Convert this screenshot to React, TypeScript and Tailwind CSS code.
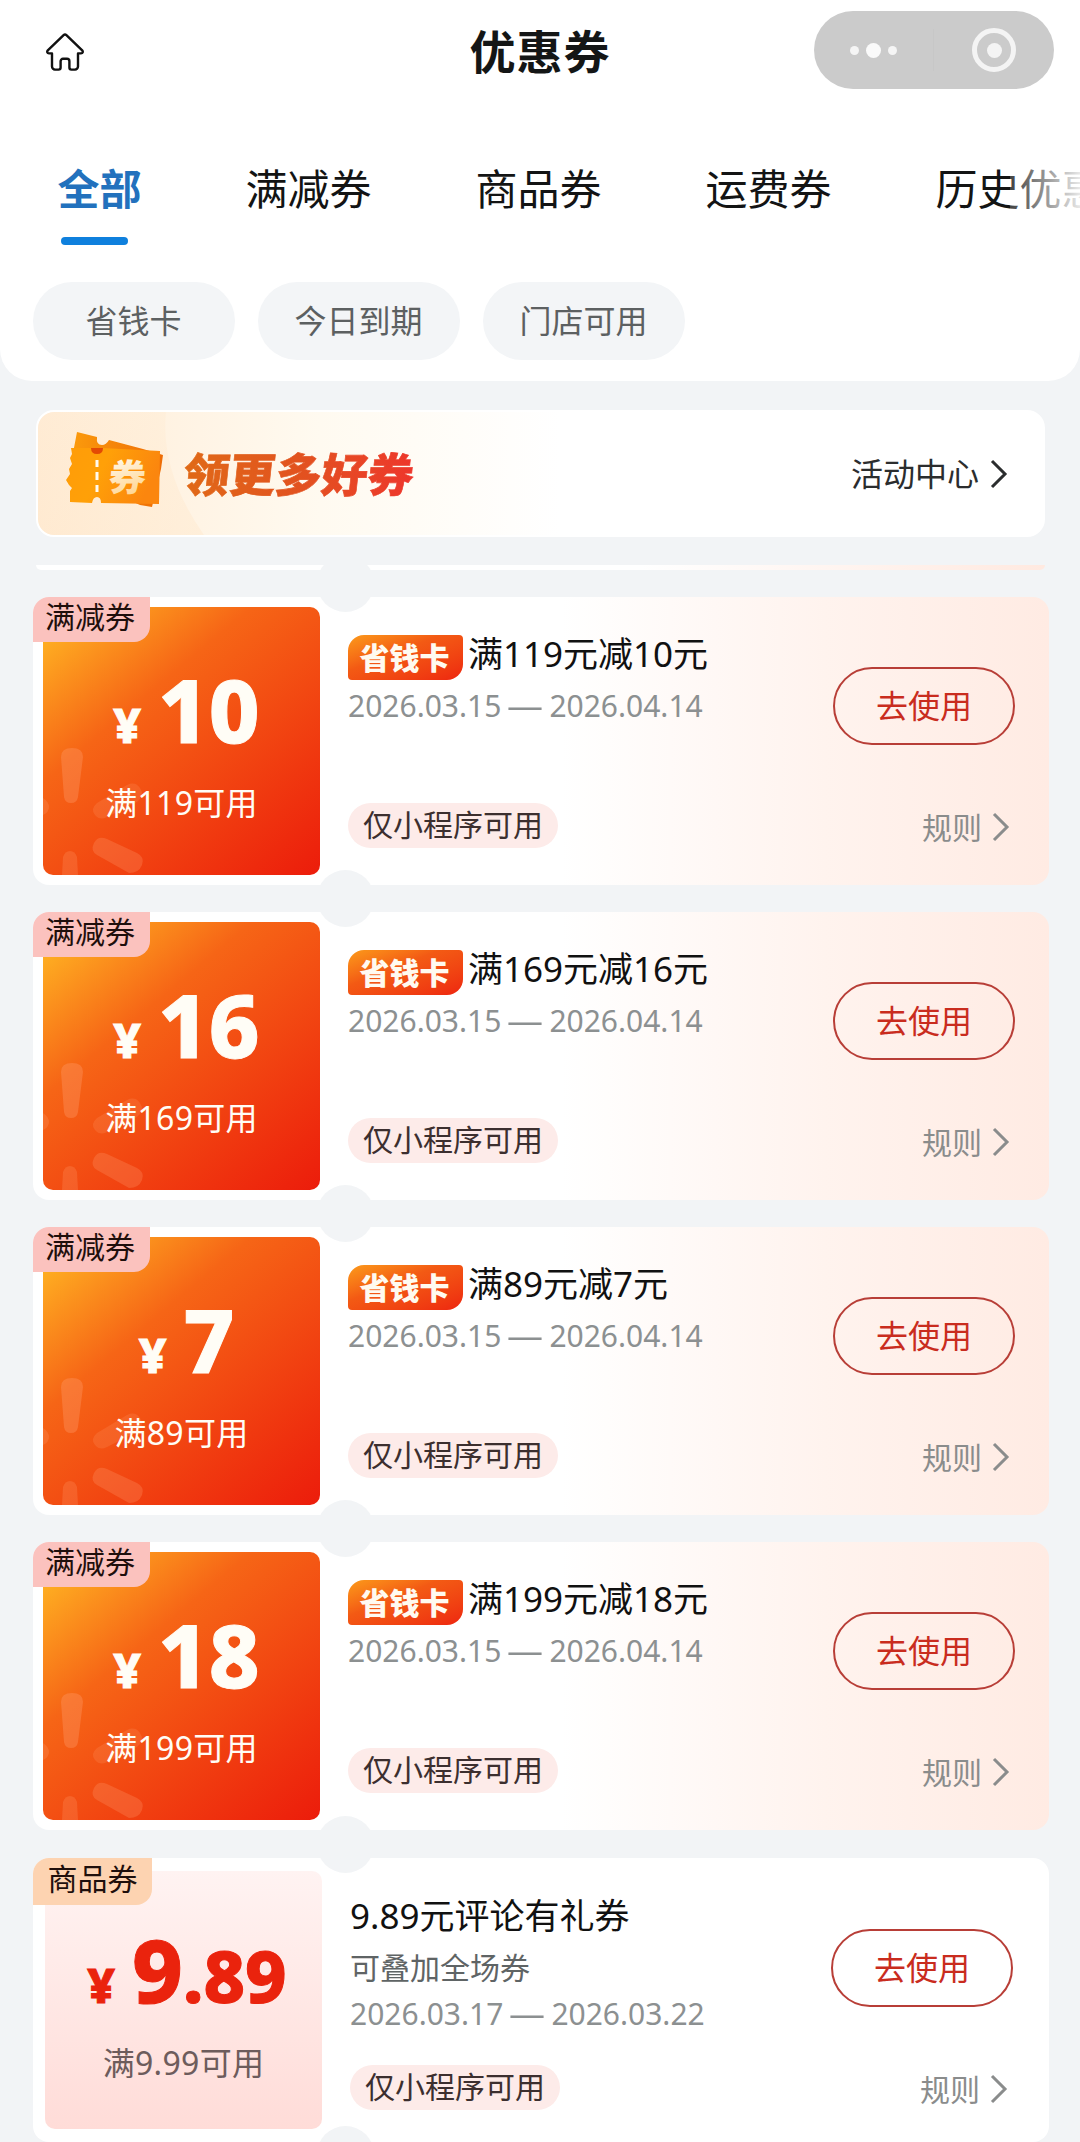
import React from 'react';

interface Coupon {
  id: number;
  kind: 'discount' | 'product';
  label: string;
  amount: string;
  decimals?: string;
  condition: string;
  title: string;
  note?: string;
  start: string;
  end: string;
}

const tabs = ['全部', '满减券', '商品券', '运费券', '历史优惠券'];
const filters = ['省钱卡', '今日到期', '门店可用'];

const coupons: Coupon[] = [
  { id: 1, kind: 'discount', label: '满减券', amount: '10', condition: '满119可用', title: '满119元减10元', start: '2026.03.15', end: '2026.04.14' },
  { id: 2, kind: 'discount', label: '满减券', amount: '16', condition: '满169可用', title: '满169元减16元', start: '2026.03.15', end: '2026.04.14' },
  { id: 3, kind: 'discount', label: '满减券', amount: '7', condition: '满89可用', title: '满89元减7元', start: '2026.03.15', end: '2026.04.14' },
  { id: 4, kind: 'discount', label: '满减券', amount: '18', condition: '满199可用', title: '满199元减18元', start: '2026.03.15', end: '2026.04.14' },
  { id: 5, kind: 'product', label: '商品券', amount: '9', decimals: '.89', condition: '满9.99可用', title: '9.89元评论有礼券', note: '可叠加全场券', start: '2026.03.17', end: '2026.03.22' },
];

const Chevron: React.FC<{ className: string }> = ({ className }) => (
  <svg className={className} width="18" height="30" viewBox="0 0 18 30" fill="none" stroke="currentColor" strokeWidth="3">
    <path d="M2 2l13 13L2 28" />
  </svg>
);

const Header = () => (
  <header className="relative flex h-[102px] items-center justify-center">
    <svg className="absolute left-[45px] top-[32px]" width="40" height="40" viewBox="0 0 40 40" fill="none" stroke="#111" strokeWidth="2.4" strokeLinejoin="round">
      <path d="M18.6 3.2a2 2 0 0 1 2.8 0L37.2 18.4c1.2 1.3.6 3-1.2 3h-3v13.2a3 3 0 0 1-3 3h-3.6a2 2 0 0 1-2-2v-6.4a2.4 2.4 0 0 0-2.4-2.4h-4a2.4 2.4 0 0 0-2.4 2.4v6.4a2 2 0 0 1-2 2H10a3 3 0 0 1-3-3V21.400H4c-1.800 0-2.400-1.700-1.200-3z" />
    </svg>
    <h1 className="text-[46px] leading-none font-bold tracking-[1px] text-[#141616]">优惠券</h1>
    <div className="absolute left-[814px] top-[11px] flex h-[78px] w-[240px] items-center rounded-full bg-[#cbcbcb]">
      <div className="flex w-[119px] items-center justify-center gap-[7px]">
        <i className="size-[9px] rounded-full bg-white/80" />
        <i className="size-[15px] rounded-full bg-white/90" />
        <i className="size-[9px] rounded-full bg-white/80" />
      </div>
      <div className="h-[42px] w-px bg-[#c7c7c7]" />
      <div className="flex flex-1 justify-center">
        <div className="flex size-[44px] items-center justify-center rounded-full border-[5px] border-[#f4f4f4]">
          <i className="size-[15px] rounded-full bg-[#f4f4f4]" />
        </div>
      </div>
    </div>
  </header>
);

const TicketIcon = () => (
  <svg width="100" height="84" viewBox="0 0 100 84">
    <defs>
      <linearGradient id="ticketFront" x1="0" y1="0" x2="1" y2="0.3">
        <stop offset="0" stopColor="#ff9c08" />
        <stop offset="0.45" stopColor="#ffa008" />
        <stop offset="1" stopColor="#fb860e" />
      </linearGradient>
      <linearGradient id="ticketBack" x1="0" y1="0" x2="1" y2="0">
        <stop offset="0" stopColor="#fb9a0c" />
        <stop offset="1" stopColor="#ee6c05" />
      </linearGradient>
      <linearGradient id="ticketText" x1="0" y1="0" x2="0.3" y2="1">
        <stop offset="0" stopColor="#fffef8" />
        <stop offset="1" stopColor="#ffd591" />
      </linearGradient>
    </defs>
    <path d="M11 0l20 5q-1 8 5 8 4 0 7-5l34 9 20 6-2 14-9 38-12-2-66-30-1-22z" fill="url(#ticketBack)" />
    <path d="M5 16h21q0 5 5 5t5-5l58 3-1 53-58-1q0-6-4-6t-5 6l-22-1v-11l2-3-3-3-3-5 4-6-1-5 3-5-2-6 2-4z" fill="url(#ticketFront)" />
    <path d="M25 16h12q0 6-6 6t-6-6z" fill="#e34a04" />
    <path d="M31 28v7M31 40v8M31 53v7" stroke="#fffaf0" strokeWidth="3" />
    <text x="43" y="59" fontSize="37" fontWeight="900" fill="url(#ticketText)" transform="skewX(-5) translate(4 0)">券</text>
  </svg>
);

const Banner = () => (
  <div className="relative ml-9 flex h-[127px] w-[1009px] items-center overflow-hidden rounded-[18px] border-2 border-white bg-linear-to-r from-[#ffecd6] via-[#fffaf0] via-28% to-white to-52% pl-[28px] pr-[35px]">
    <svg className="absolute left-0 top-0" width="180" height="123" viewBox="0 0 180 123">
      <defs>
        <linearGradient id="bannerGlow" x1="0" y1="0" x2="1" y2="1">
          <stop offset="0" stopColor="#ffdcb0" stopOpacity="0.05" />
          <stop offset="1" stopColor="#ffe0bd" stopOpacity="0.28" />
        </linearGradient>
      </defs>
      <path d="M0 0h128q-6 60 38 123H0z" fill="url(#bannerGlow)" />
    </svg>
    <div className="relative">
      <TicketIcon />
    </div>
    <span className="relative ml-[14px] -skew-x-6 bg-linear-to-r from-[#e06a16] via-[#e2521f] to-[#ee342c] bg-clip-text px-1 text-[46px] leading-[60px] font-black text-transparent [-webkit-text-stroke:0.7px_transparent]">
      领更多好券
    </span>
    <span className="ml-auto text-[32px] leading-none text-[#2b2d2e]">活动中心</span>
    <Chevron className="ml-[11px] text-[#2b2d2e]" />
  </div>
);

const Sparks = () => (
  <svg className="absolute inset-0" width="278" height="268" viewBox="0 0 278 268" fill="#ff9a6a" fillOpacity="0.36">
    <path d="M18 150q0-9 11-9t11 9l-5 40q-1 6-7 6t-7-6z" />
    <path d="M84 178q8-4 13 3t-3 14L64 210q-7 4-12-2t2-12z" fillOpacity="0.22" />
    <path d="M51 236q4-8 13-4l30 14q8 4 5 12t-13 8L54 248q-7-4-3-12z" fillOpacity="0.28" />
    <path d="M19 268l1-18q2-6 7-6t7 6l1 18z" fillOpacity="0.26" />
    <path d="M0 191q6 4 6 9t-6 8z" fillOpacity="0.26" />
  </svg>
);

const SavingBadge = () => (
  <span className="mt-[3px] flex h-[45px] w-[115px] items-center justify-center rounded-[4px] rounded-tl-[16px] rounded-br-[16px] bg-linear-to-br from-[#fb9a1b] via-[#f35a14] via-40% to-[#ee2410] pt-[2px] pr-[2px] text-[30px] leading-none font-black text-[#fffaf0]">
    省钱卡
  </span>
);

const CouponCard: React.FC<{ coupon: Coupon }> = ({ coupon }) => {
  const isProduct = coupon.kind === 'product';

  return (
    <div
      className={`relative flex w-[1016px] shrink-0 rounded-[16px] ${
        isProduct ? 'mt-px h-[284px] bg-white' : 'h-[288px] bg-linear-to-r from-white from-52% via-[#fff3ee] via-78% to-[#ffebe3]'
      }`}
    >
      {/* Left value tile */}
      <div
        className={`relative flex w-[277px] flex-col items-center overflow-hidden rounded-[10px] ${
          isProduct
            ? 'ml-3 mt-[13px] h-[258px] bg-linear-to-b from-[#fff3f2] to-[#ffdcd8] text-[#ea230d]'
            : 'ml-[10px] mt-[10px] h-[268px] bg-linear-[140deg] from-[#ffb222] from-5% via-[#f66516] via-35% to-[#ec1c0b] text-[#fffdf6]'
        }`}
      >
        {!isProduct && <Sparks />}
        <div
          className={`relative flex items-baseline font-extrabold leading-[88px] [-webkit-text-stroke:1px_currentColor] ${
            isProduct ? 'mt-[54px] pl-[7px]' : 'mt-[58px] pl-[10px]'
          }`}
        >
          <span className="mr-[17px] text-[48px]">¥</span>
          <span className="text-[88px]">{coupon.amount}</span>
          {coupon.decimals && <span className="text-[72px]">{coupon.decimals}</span>}
        </div>
        <div className={`relative mt-[14px] text-[32px] leading-[40px] tracking-[0.3px] ${isProduct ? 'text-[#6d5c5c]' : ''}`}>{coupon.condition}</div>
      </div>

      {/* Details */}
      <div className={`flex flex-1 flex-col items-start ${isProduct ? 'pl-[28px] pt-[33px]' : 'pl-[28px] pt-[34px]'}`}>
        <div className="flex h-[49px] items-center gap-[5px] text-[35px] leading-none text-[#111]">
          {!isProduct && <SavingBadge />}
          <span className={isProduct ? '' : '-mt-[4px]'}>{coupon.title}</span>
        </div>
        {coupon.note && <div className="mt-[6px] text-[30px] leading-[44px] text-[#5f6465]">{coupon.note}</div>}
        <div className={`flex gap-[9px] whitespace-nowrap text-[30px] leading-[44px] text-[#8c9091] ${isProduct ? 'mt-[2px]' : 'mt-[4px]'}`}>
          <span>{coupon.start}</span>
          <span className="scale-x-120">—</span>
          <span>{coupon.end}</span>
        </div>
        <div className={`flex h-[45px] items-center rounded-full bg-[#fdebe9] px-[15px] pb-[2px] text-[30px] leading-none text-[#3c2f2f] ${isProduct ? 'mt-[29px]' : 'mt-[75px]'}`}>
          仅小程序可用
        </div>
      </div>

      {/* Actions */}
      <div className={`flex flex-col items-end ${isProduct ? 'pr-[36px] pt-[71px]' : 'pr-[34px] pt-[70px]'}`}>
        <button className="h-[78px] w-[182px] rounded-full border-2 border-[#b83e37] text-[32px] leading-none text-[#c92c1e]">去使用</button>
        <div className="mt-[68px] mr-[5px] flex items-center text-[30px] leading-[30px] text-[#8a8c8c]">
          规则
          <Chevron className="ml-[10px] -mt-[2px]" />
        </div>
      </div>

      <span
        className={`absolute left-0 top-0 flex items-center justify-center rounded-tl-[16px] rounded-br-[16px] pb-[5px] text-[30px] leading-none text-[#1f0f0c] ${
          isProduct ? 'h-[47px] w-[119px] bg-[#fdd3b1]' : 'h-[45px] w-[117px] bg-[#fbc2be] pr-[3px]'
        }`}
      >
        {coupon.label}
      </span>
      <i className="absolute left-[284px] top-[-42px] size-[57px] rounded-full bg-[#f2f4f6]" />
    </div>
  );
};

const App: React.FC = () => {
  return (
    <div className="h-[2142px] w-[1080px] overflow-hidden bg-[#f2f4f6] font-['Noto_Sans','Noto_Sans_CJK_SC',sans-serif]">
      <div className="h-[381px] rounded-b-[32px] bg-white">
        <Header />
        <nav className="relative flex h-[143px] gap-[104px] overflow-hidden pl-[57.5px] pt-[57px]">
          {tabs.map((tab, index) => (
            <div key={tab} className="shrink-0 text-[42px] leading-[60px]">
              <div className={index === 0 ? 'font-bold text-[#2271bd]' : 'text-[#131414]'}>{tab}</div>
              {index === 0 && <div className="ml-[3px] mt-[18px] h-2 w-[67px] rounded-full bg-[#0f80dd]" />}
            </div>
          ))}
          <div className="absolute right-0 top-0 h-full w-[70px] bg-linear-to-r from-white/20 to-white/90" />
        </nav>
        <div className="mt-[37px] flex gap-[23px] pl-[33px]">
          {filters.map(filter => (
            <div key={filter} className="flex h-[78px] w-[202px] items-center justify-center rounded-full bg-[#f3f5f7] pr-[1px] text-[32px] leading-none text-[#5c6061]">
              {filter}
            </div>
          ))}
        </div>
      </div>

      <main className="pt-[29px]">
        <Banner />
        {/* Bottom edge of the coupon scrolled under the banner */}
        <div className="mt-[28px] ml-9 h-[5px] w-[1009px] rounded-b-[6px] bg-linear-to-r from-white from-60% to-[#ffe9e0]" />
        <div className="mt-[27px] flex flex-col gap-[27px] pl-[33px]">
          {coupons.map(coupon => (
            <CouponCard key={coupon.id} coupon={coupon} />
          ))}
          <div className="relative h-10">
            <i className="absolute left-[284px] top-[-43px] size-[57px] rounded-full bg-[#f2f4f6]" />
          </div>
        </div>
      </main>
    </div>
  );
};

export default App;
